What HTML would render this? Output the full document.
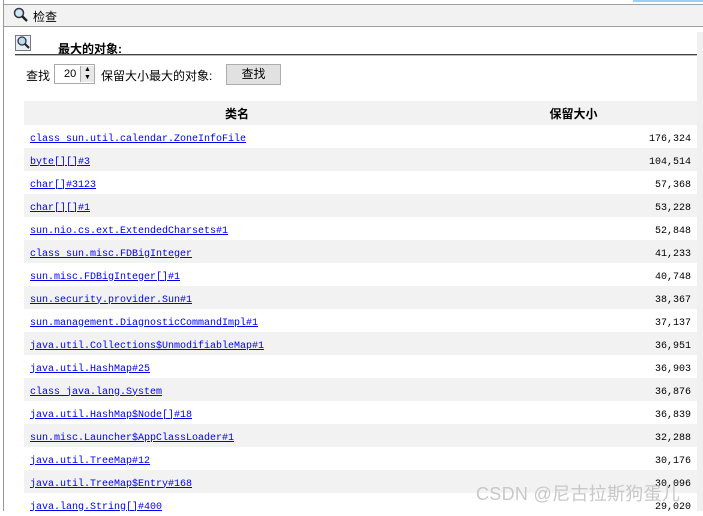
<!DOCTYPE html>
<html><head><meta charset="utf-8"><style>
body{margin:0;width:703px;height:511px;overflow:hidden;background:#fff;font-family:"Liberation Sans","Noto Sans CJK SC",sans-serif;position:relative}
.lb{position:absolute;left:3px;top:0;width:1px;height:511px;background:#999}
.tb{position:absolute;left:4px;top:4px;width:699px;height:21px;background:#f2f2f2;border-top:1px solid #a0a0a0;border-bottom:1px solid #a0a0a0}
.tb span{position:absolute;left:29px;top:3px;font-size:12px;color:#000}
.hl{position:absolute;left:633px;top:0;width:70px;height:2px;background:#9cd0f5}
.sb{position:absolute;left:697px;top:32px;width:6px;height:479px;background:#f0f0f0}
.sec{position:absolute;left:58px;top:40px;font-size:12px;font-weight:bold}
.sl{position:absolute;left:15px;top:54px;width:682px;height:1px;background:#444;border-bottom:1px solid #bbb}
.f{position:absolute;top:67px;font-size:12px}
.sp{position:absolute;left:54px;top:64px;width:41px;height:20px;border:1px solid #aaa;box-sizing:border-box;font-size:11px}
.btn{position:absolute;left:226px;top:64px;width:55px;height:21px;background:#e1e1e1;border:1px solid #adadad;box-sizing:border-box;font-size:12px;text-align:center;line-height:19px}
table{position:absolute;left:24px;top:101px;width:673px;border-collapse:collapse;table-layout:fixed}
th{height:24px;background:#f2f2f2;font-size:12px;font-weight:bold;padding:0;text-align:center}
td{height:18px;padding:5px 6px 0;font-family:"Liberation Mono",monospace;font-size:10px;vertical-align:middle;white-space:nowrap}
tr:nth-child(odd) td{background:#f2f2f2}
td a{color:#00e;text-decoration:underline}
td.n{text-align:right;color:#000}
.wm{position:absolute;left:476px;top:480px;font-size:18px;color:#c8c8c8;letter-spacing:0.3px}
</style></head><body>
<div class="lb"></div><div class="hl"></div>
<div class="tb"><svg style="position:absolute;left:9px;top:2px" width="16" height="16"><circle cx="6" cy="6" r="4.5" fill="#cfe6f7" stroke="#334" stroke-width="1.5"/><line x1="9" y1="9" x2="14" y2="14" stroke="#222" stroke-width="2.5"/></svg><span>检查</span></div>
<div class="sb"></div>
<svg style="position:absolute;left:15px;top:35px" width="16" height="16"><rect x="0.5" y="0.5" width="15" height="15" fill="#e8eef4" stroke="#778"/><circle cx="7" cy="6" r="4" fill="#bde" stroke="#334" stroke-width="1.3"/><line x1="10" y1="9" x2="14" y2="13" stroke="#222" stroke-width="2"/></svg>
<div class="sec">最大的对象:</div>
<div class="sl"></div>
<div class="f" style="left:26px">查找</div>
<div class="sp"><span style="position:absolute;left:9px;top:3px">20</span><div style="position:absolute;left:25px;top:1px;width:13px;height:16px;background:#e8e8e8;border-left:1px solid #aaa;font-size:7px;line-height:8px;text-align:center">▲<br>▼</div></div>
<div class="f" style="left:101px">保留大小最大的对象:</div>
<div class="btn">查找</div>
<table>
<colgroup><col style="width:426px"><col style="width:247px"></colgroup>
<tr><th>类名</th><th>保留大小</th></tr>
<tr><td><a>class sun.util.calendar.ZoneInfoFile</a></td><td class="n">176,324</td></tr>
<tr><td><a>byte[][]#3</a></td><td class="n">104,514</td></tr>
<tr><td><a>char[]#3123</a></td><td class="n">57,368</td></tr>
<tr><td><a>char[][]#1</a></td><td class="n">53,228</td></tr>
<tr><td><a>sun.nio.cs.ext.ExtendedCharsets#1</a></td><td class="n">52,848</td></tr>
<tr><td><a>class sun.misc.FDBigInteger</a></td><td class="n">41,233</td></tr>
<tr><td><a>sun.misc.FDBigInteger[]#1</a></td><td class="n">40,748</td></tr>
<tr><td><a>sun.security.provider.Sun#1</a></td><td class="n">38,367</td></tr>
<tr><td><a>sun.management.DiagnosticCommandImpl#1</a></td><td class="n">37,137</td></tr>
<tr><td><a>java.util.Collections$UnmodifiableMap#1</a></td><td class="n">36,951</td></tr>
<tr><td><a>java.util.HashMap#25</a></td><td class="n">36,903</td></tr>
<tr><td><a>class java.lang.System</a></td><td class="n">36,876</td></tr>
<tr><td><a>java.util.HashMap$Node[]#18</a></td><td class="n">36,839</td></tr>
<tr><td><a>sun.misc.Launcher$AppClassLoader#1</a></td><td class="n">32,288</td></tr>
<tr><td><a>java.util.TreeMap#12</a></td><td class="n">30,176</td></tr>
<tr><td><a>java.util.TreeMap$Entry#168</a></td><td class="n">30,096</td></tr>
<tr><td><a>java.lang.String[]#400</a></td><td class="n">29,020</td></tr>
</table>
<div class="wm">CSDN @尼古拉斯狗蛋儿</div>
</body></html>
